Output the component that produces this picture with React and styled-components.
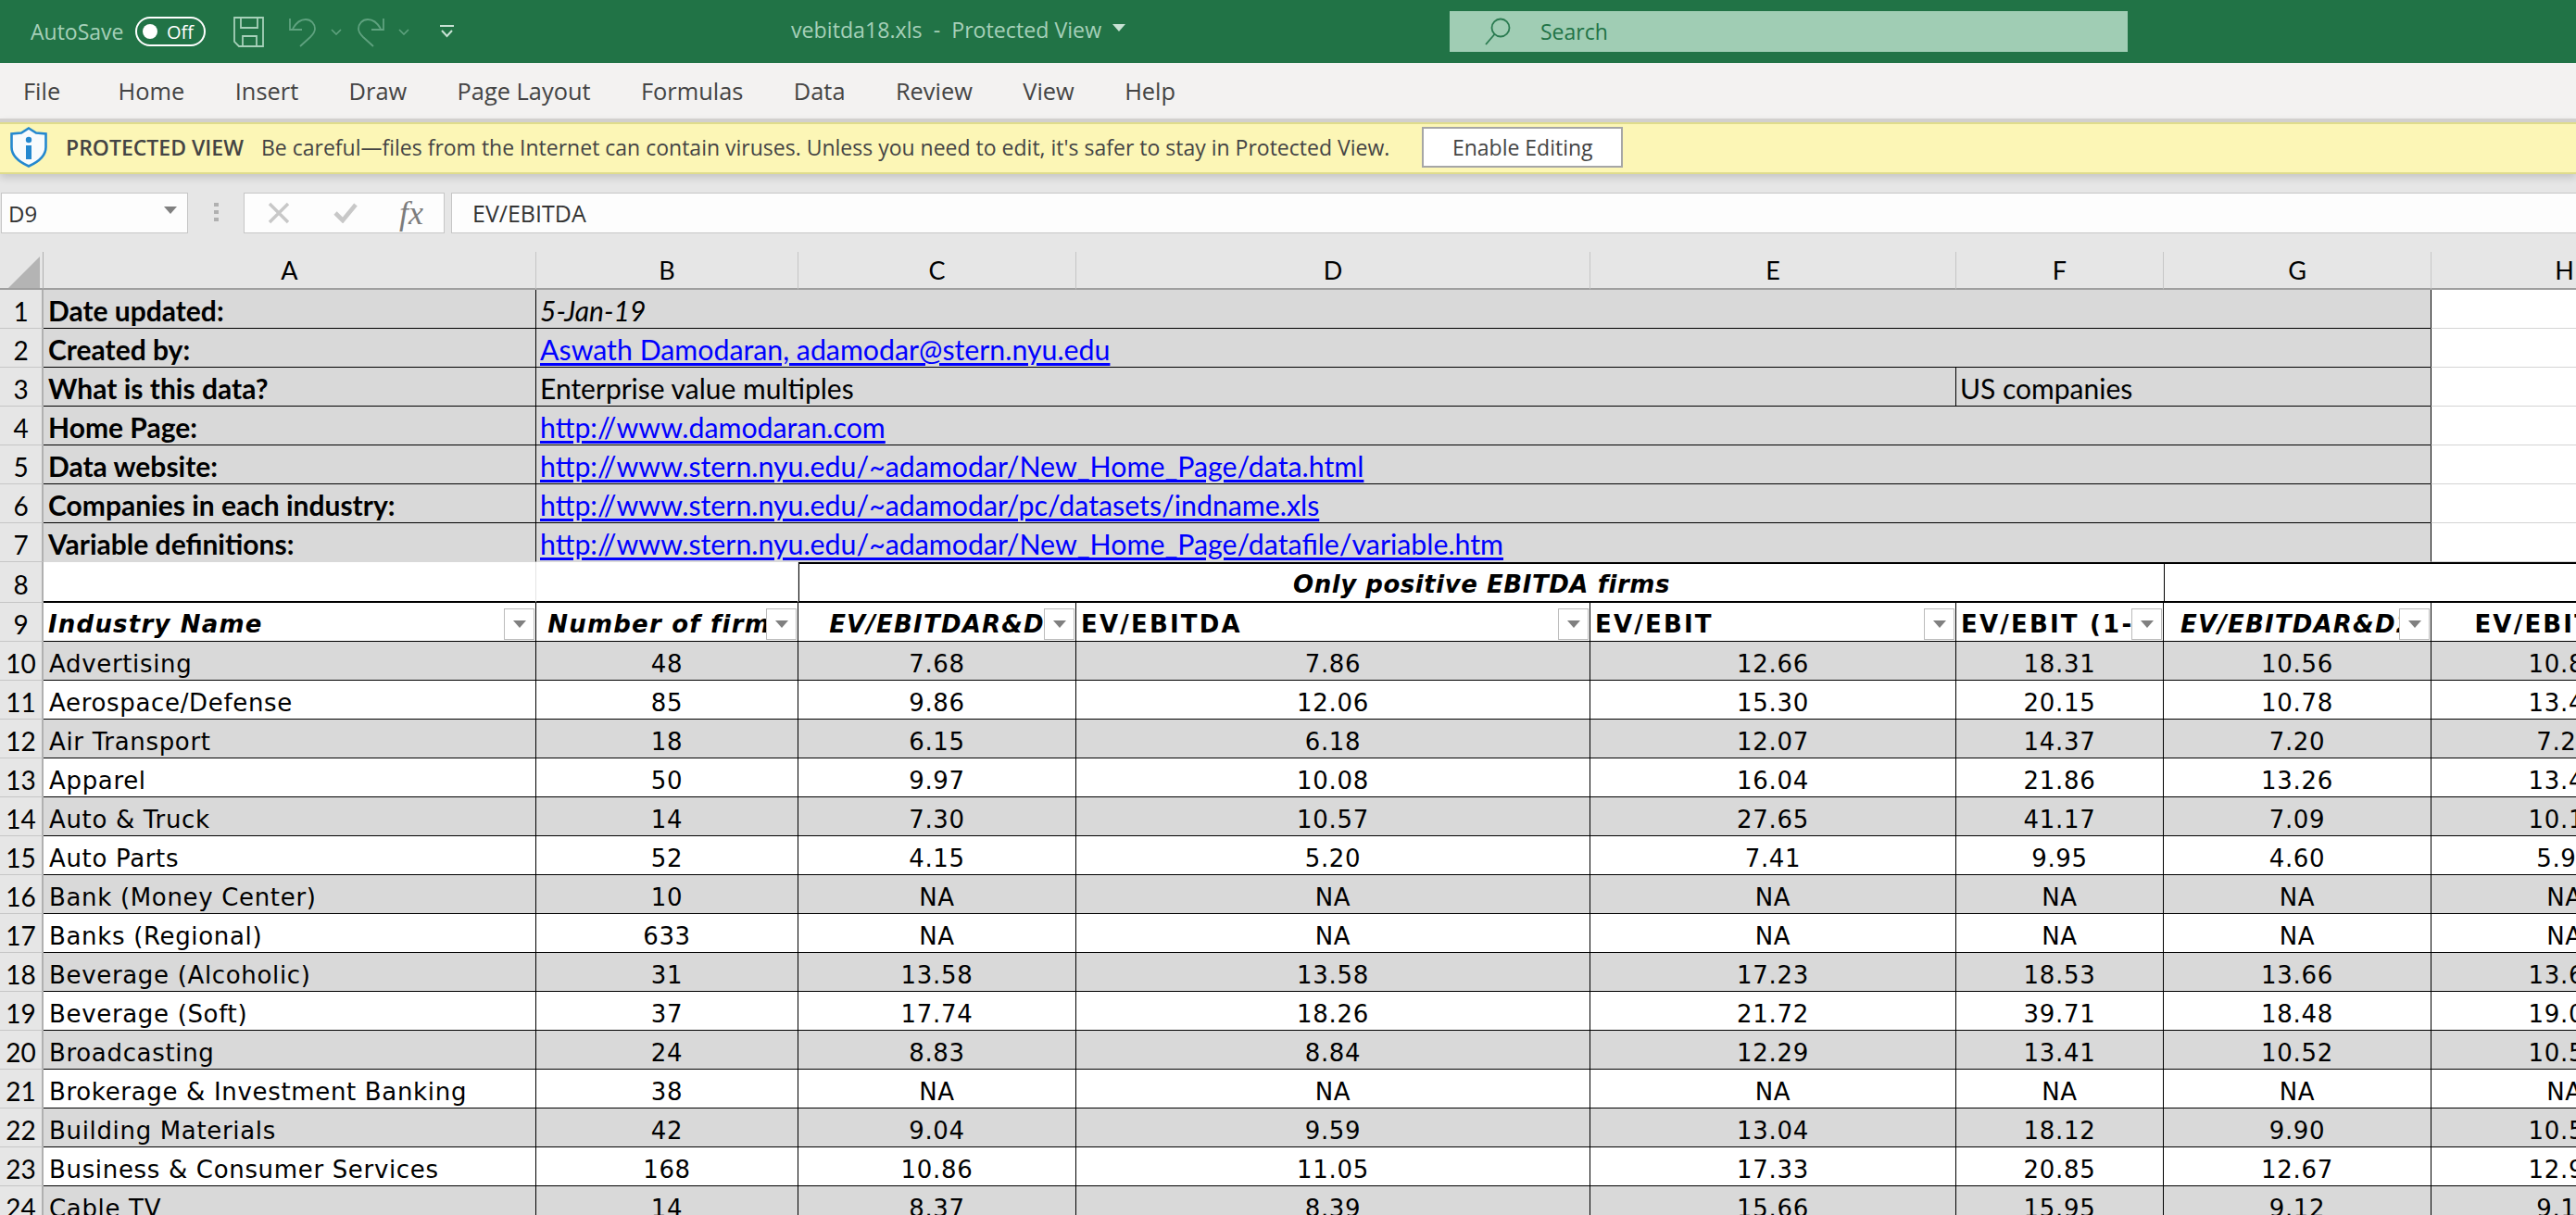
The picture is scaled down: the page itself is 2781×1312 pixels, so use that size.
import React from 'react'
import styled, { createGlobalStyle } from 'styled-components'

const GlobalStyle = createGlobalStyle`
html, body {
  margin: 0;
  padding: 0;
  width: 2781px;
  height: 1312px;
  overflow: hidden;
  background: #e6e6e6;
}
* { box-sizing: border-box; }
`

const ui = '"Open Sans", "Noto Sans", sans-serif'
const calibri = 'Lato, "Noto Sans", sans-serif'
const verdana = '"DejaVu Sans", Verdana, sans-serif'

const TABS = ['File', 'Home', 'Insert', 'Draw', 'Page Layout', 'Formulas', 'Data', 'Review', 'View', 'Help']

const META = [
  { label: 'Date updated:', value: '5-Jan-19', italic: true },
  { label: 'Created by:', value: 'Aswath Damodaran, adamodar@stern.nyu.edu', link: true },
  { label: 'What is this data?', value: 'Enterprise value multiples', extra: 'US companies' },
  { label: 'Home Page:', value: 'http://www.damodaran.com', link: true },
  { label: 'Data website:', value: 'http://www.stern.nyu.edu/~adamodar/New_Home_Page/data.html', link: true },
  { label: 'Companies in each industry:', value: 'http://www.stern.nyu.edu/~adamodar/pc/datasets/indname.xls', link: true },
  { label: 'Variable definitions:', value: 'http://www.stern.nyu.edu/~adamodar/New_Home_Page/datafile/variable.htm', link: true },
]

const HEADERS = [
  { text: 'Industry Name', italic: true, align: 'left' },
  { text: 'Number of firms', italic: true },
  { text: 'EV/EBITDAR&D', italic: true },
  { text: 'EV/EBITDA', align: 'left' },
  { text: 'EV/EBIT', align: 'left' },
  { text: 'EV/EBIT (1-t)', align: 'left' },
  { text: 'EV/EBITDAR&D2', italic: true },
  { text: 'EV/EBITDA2', noFilter: true },
]

const NA = ['NA', 'NA', 'NA', 'NA', 'NA', 'NA']

const ROWS = [
  ['Advertising', '48', '7.68', '7.86', '12.66', '18.31', '10.56', '10.88'],
  ['Aerospace/Defense', '85', '9.86', '12.06', '15.30', '20.15', '10.78', '13.47'],
  ['Air Transport', '18', '6.15', '6.18', '12.07', '14.37', '7.20', '7.23'],
  ['Apparel', '50', '9.97', '10.08', '16.04', '21.86', '13.26', '13.47'],
  ['Auto & Truck', '14', '7.30', '10.57', '27.65', '41.17', '7.09', '10.13'],
  ['Auto Parts', '52', '4.15', '5.20', '7.41', '9.95', '4.60', '5.98'],
  ['Bank (Money Center)', '10', ...NA],
  ['Banks (Regional)', '633', ...NA],
  ['Beverage (Alcoholic)', '31', '13.58', '13.58', '17.23', '18.53', '13.66', '13.67'],
  ['Beverage (Soft)', '37', '17.74', '18.26', '21.72', '39.71', '18.48', '19.02'],
  ['Broadcasting', '24', '8.83', '8.84', '12.29', '13.41', '10.52', '10.53'],
  ['Brokerage & Investment Banking', '38', ...NA],
  ['Building Materials', '42', '9.04', '9.59', '13.04', '18.12', '9.90', '10.50'],
  ['Business & Consumer Services', '168', '10.86', '11.05', '17.33', '20.85', '12.67', '12.90'],
  ['Cable TV', '14', '8.37', '8.39', '15.66', '15.95', '9.12', '9.14'],
]

function App() {
  return (
    <Page>
      <GlobalStyle />
      <TitleBar>
        <QuickAccess>
          <AutoSaveLabel>AutoSave</AutoSaveLabel>
          <Toggle><Knob /><span>Off</span></Toggle>
          <SaveIcon width="33" height="33" viewBox="0 0 33 33">
            <path d="M1 1H32V32H6L1 27Z M8 1V12H26V1 M10 32V21H25V32" />
          </SaveIcon>
          <HistoryIcon width="30" height="33" viewBox="0 0 30 33">
            <path d="M1 2V14H14 M4 13C8 6 13 3 18 3C24 3 28 8 28 13C28 17 26 19 23 22L12 32" />
          </HistoryIcon>
          <MiniChevron width="12" height="7" viewBox="0 0 12 7"><path d="M1 1L6 6L11 1" /></MiniChevron>
          <HistoryIcon $flip width="30" height="33" viewBox="0 0 30 33">
            <path d="M1 2V14H14 M4 13C8 6 13 3 18 3C24 3 28 8 28 13C28 17 26 19 23 22L12 32" />
          </HistoryIcon>
          <MiniChevron width="12" height="7" viewBox="0 0 12 7"><path d="M1 1L6 6L11 1" /></MiniChevron>
          <CustomizeIcon width="15" height="14" viewBox="0 0 15 14">
            <path d="M0 1H15 M2 6L7.5 12L13 6" />
          </CustomizeIcon>
        </QuickAccess>
        <FileTitle>
          vebitda18.xls&nbsp; - &nbsp;Protected View
          <TitleCaret />
        </FileTitle>
        <SearchBox>
          <svg width="30" height="31" viewBox="0 0 30 31" fill="none" stroke="#2a7a50" strokeWidth="1.8">
            <circle cx="17" cy="11" r="9.5" />
            <path d="M10.5 18L1 29" />
          </svg>
          <span>Search</span>
        </SearchBox>
      </TitleBar>

      <TabBar>
        {TABS.map((t) => <Tab key={t}>{t}</Tab>)}
      </TabBar>

      <Banner>
        <svg width="40" height="44" viewBox="0 0 40 44">
          <path d="M20 1.5L28 6.5L38.5 7.5V22C38.5 31 30 38 20 42.5C10 38 1.5 31 1.5 22V7.5L12 6.5Z" fill="#f8fbfd" stroke="#2488cf" strokeWidth="2.6" />
          <circle cx="20" cy="14" r="3.2" fill="#2488cf" />
          <rect x="17" y="20" width="6" height="15" fill="#2488cf" />
        </svg>
        <BannerTitle>PROTECTED VIEW</BannerTitle>
        <BannerText>Be careful—files from the Internet can contain viruses. Unless you need to edit, it's safer to stay in Protected View.</BannerText>
        <EnableButton>Enable Editing</EnableButton>
      </Banner>

      <FormulaRow>
        <NameBox>
          D9
          <NameCaret />
        </NameBox>
        <GripDots><i /><i /><i /></GripDots>
        <FormulaTools>
          <svg width="24" height="24" viewBox="0 0 24 24" fill="none" stroke="#c8c8c8" strokeWidth="3.4">
            <path d="M2 2L22 22M22 2L2 22" />
          </svg>
          <svg width="26" height="22" viewBox="0 0 26 22" fill="none" stroke="#c8c8c8" strokeWidth="4.6">
            <path d="M2 11L10 19L24 2" />
          </svg>
          <FxText>fx</FxText>
        </FormulaTools>
        <FormulaInput>EV/EBITDA</FormulaInput>
      </FormulaRow>

      <Sheet>
        <Corner>
          <svg width="34" height="34" viewBox="0 0 34 34"><path d="M34 0V34H0Z" fill="#b4b4b4" /></svg>
        </Corner>
        {['A', 'B', 'C', 'D', 'E', 'F', 'G', 'H'].map((c) => <ColHead key={c}>{c}</ColHead>)}

        {META.map((m, i) => {
          const last = i === META.length - 1
          return (
            <React.Fragment key={m.label}>
              <RowHead>{i + 1}</RowHead>
              <MetaLabel $last={last}>{m.label}</MetaLabel>
              <MetaValue $span={m.extra ? 4 : 6} $italic={m.italic} $last={last}>
                {m.link ? <SheetLink>{m.value}</SheetLink> : m.value}
              </MetaValue>
              {m.extra && <MetaValue $span={2}>{m.extra}</MetaValue>}
              <EmptyCell />
            </React.Fragment>
          )
        })}

        <RowHead>8</RowHead>
        <BlankCell />
        <BlankCell />
        <GroupCell $span={4}>Only positive EBITDA firms</GroupCell>
        <GroupCell $span={2} />

        <RowHead>9</RowHead>
        {HEADERS.map((h) => (
          <HeaderCell key={h.text} $italic={h.italic} $align={h.align}>
            {h.text}
            {!h.noFilter && <FilterButton><FilterArrow /></FilterButton>}
          </HeaderCell>
        ))}

        {ROWS.map((row, i) => (
          <React.Fragment key={row[0]}>
            <RowHead>{i + 10}</RowHead>
            {row.map((v, j) => (
              <DataCell key={j} $shade={i % 2 === 0} $left={j === 0}>{v}</DataCell>
            ))}
          </React.Fragment>
        ))}
      </Sheet>
    </Page>
  )
}

export default App

const Page = styled.div`
width: 2781px;
height: 1312px;
overflow: hidden;
display: flex;
flex-direction: column;
background: #e6e6e6;
`
const TitleBar = styled.div`
height: 68px;
flex: none;
background: #217346;
display: flex;
align-items: center;
padding-left: 33px;
font-family: ${ui};
`
const QuickAccess = styled.div`
width: 821px;
flex: none;
display: flex;
align-items: center;
`
const AutoSaveLabel = styled.span`
font-size: 23px;
color: #a6d0b9;
width: 113px;
`
const Toggle = styled.div`
width: 76px;
height: 32px;
border: 2px solid #fff;
border-radius: 16px;
display: flex;
align-items: center;
justify-content: space-between;
padding: 0 11px 0 6px;
color: #fff;
font-size: 20px;
margin-right: 30px;
`
const Knob = styled.div`
width: 16px;
height: 16px;
border-radius: 50%;
background: #fff;
`
const SaveIcon = styled.svg`
fill: none;
stroke: #a6d0b9;
stroke-width: 1.8;
margin-right: 27px;
`
const HistoryIcon = styled.svg`
fill: none;
stroke: #5fa27f;
stroke-width: 1.8;
margin-right: 15px;
transform: ${(p) => (p.$flip ? 'scaleX(-1)' : 'none')};
`
const MiniChevron = styled.svg`
fill: none;
stroke: #5fa27f;
stroke-width: 1.6;
margin-right: 16px;
`
const CustomizeIcon = styled.svg`
fill: none;
stroke: #c8e2d4;
stroke-width: 2;
margin-left: 17px;
`
const FileTitle = styled.div`
width: 711px;
flex: none;
font-size: 23.2px;
color: #a6d0b9;
display: flex;
align-items: center;
white-space: nowrap;
padding-bottom: 4px;
`
const TitleCaret = styled.div`
width: 0;
height: 0;
margin: -4px 0 0 12px;
border-left: 7px solid transparent;
border-right: 7px solid transparent;
border-top: 8px solid #c8e2d4;
`
const SearchBox = styled.div`
width: 732px;
height: 44px;
flex: none;
background: #a0cdb4;
display: flex;
align-items: center;
gap: 30px;
padding-left: 38px;
color: #217346;
font-size: 23px;
`
const TabBar = styled.div`
height: 60px;
flex: none;
background: #f3f2f1;
display: flex;
align-items: center;
gap: 54.4px;
padding-left: 25px;
`
const Tab = styled.div`
font-family: ${ui};
font-size: 25.4px;
color: #444;
&:first-child { margin-right: 8px; }
`
const Banner = styled.div`
height: 60px;
flex: none;
border-top: 4px solid #d2d0ce;
border-bottom: 2px solid #dfdc8c;
background: #fcf6b6;
box-shadow: inset 0 2px 0 #dfdc8c, 0 4px 8px rgba(0, 0, 0, 0.14);
display: flex;
align-items: center;
padding-left: 11px;
font-family: ${ui};
font-size: 23px;
color: #444;
position: relative;
`
const BannerTitle = styled.span`
font-weight: 600;
margin-left: 20px;
`
const BannerText = styled.span`
margin-left: 19px;
`
const EnableButton = styled.div`
margin-left: 35px;
width: 217px;
height: 44px;
background: #fff;
border: 2px solid #a6a6a6;
display: flex;
align-items: center;
justify-content: center;
`
const FormulaRow = styled.div`
height: 84px;
flex: none;
padding: 20px 0 20px 1px;
display: flex;
align-items: stretch;
font-family: ${ui};
font-size: 25px;
color: #333;
`
const NameBox = styled.div`
width: 202px;
background: #fdfdfd;
border: 1px solid #c6c6c6;
display: flex;
align-items: center;
justify-content: space-between;
padding: 0 11px 0 7px;
font-size: 24px;
`
const NameCaret = styled.div`
width: 0;
height: 0;
margin-top: -6px;
border-left: 7px solid transparent;
border-right: 7px solid transparent;
border-top: 8px solid #808080;
`
const GripDots = styled.div`
width: 60px;
display: flex;
flex-direction: column;
align-items: center;
justify-content: center;
gap: 4px;
padding-bottom: 3px;
> i {
  display: block;
  width: 5px;
  height: 4px;
  background: #b0b0b0;
}
`
const FormulaTools = styled.div`
width: 217px;
background: #fdfdfd;
border: 1px solid #c6c6c6;
display: flex;
align-items: center;
gap: 47px;
padding-left: 25px;
`
const FxText = styled.span`
font-family: "Liberation Serif", serif;
font-style: italic;
font-size: 36px;
color: #7c7c7c;
margin-left: -2px;
`
const FormulaInput = styled.div`
flex: 1;
margin-left: 7px;
background: #fdfdfd;
border: 1px solid #c6c6c6;
border-right: 0;
display: flex;
align-items: center;
padding-left: 22px;
`
const Sheet = styled.div`
flex: none;
display: grid;
grid-template-columns: 47px 532px 283px 300px 555px 395px 224px 289px 288px;
grid-template-rows: 41px repeat(7, 42px) 44px;
grid-auto-rows: 42px;
background: #fff;
color: #000;
`
const Corner = styled.div`
background: #e6e6e6;
border-right: 1px solid #b0b0b0;
border-bottom: 2px solid #9f9f9f;
display: flex;
align-items: flex-start;
justify-content: flex-end;
padding: 5px 3px 0 0;
`
const ColHead = styled.div`
background: #e6e6e6;
border-right: 1px solid #c6c6c6;
border-bottom: 2px solid #9f9f9f;
display: flex;
align-items: center;
justify-content: center;
font-family: ${calibri};
font-size: 27px;
`
const RowHead = styled.div`
background: #e6e6e6;
border-right: 2px solid #b0b0b0;
border-bottom: 1px solid #c6c6c6;
display: flex;
align-items: center;
justify-content: center;
font-family: ${calibri};
font-size: 28px;
padding-top: 5px;
`
const MetaLabel = styled.div`
background: #d9d9d9;
border-right: 1px solid #000;
border-bottom: 1px solid ${(p) => (p.$last ? '#d9d9d9' : '#000')};
display: flex;
align-items: center;
padding: 2px 0 0 5px;
font-family: ${calibri};
font-size: 30px;
font-weight: 700;
white-space: nowrap;
`
const MetaValue = styled.div`
grid-column: span ${(p) => p.$span};
background: #d9d9d9;
border-right: 1px solid #000;
border-bottom: 1px solid ${(p) => (p.$last ? '#d9d9d9' : '#000')};
display: flex;
align-items: center;
padding: 2px 0 0 4px;
font-family: ${calibri};
font-size: 30px;
font-style: ${(p) => (p.$italic ? 'italic' : 'normal')};
white-space: nowrap;
`
const SheetLink = styled.span`
color: #0000ff;
font-size: 30.3px;
text-decoration: underline;
text-underline-offset: 3px;
`
const EmptyCell = styled.div`
background: #fff;
border-left: 1px solid #000;
margin-left: -1px;
border-bottom: 1px solid #d4d4d4;
`
const BlankCell = styled.div`
background: #fff;
border-right: 1px solid #e4e4e4;
border-bottom: 2px solid #000;
`
const GroupCell = styled.div`
grid-column: span ${(p) => p.$span};
background: #fff;
border-top: 2px solid #000;
border-bottom: 2px solid #000;
border-left: 1px solid #000;
display: flex;
align-items: center;
justify-content: center;
padding-top: 4px;
font-family: ${verdana};
font-size: 26px;
letter-spacing: 0.55px;
font-weight: 700;
font-style: italic;
`
const HeaderCell = styled.div`
position: relative;
background: #fff;
border-right: 1px solid #000;
border-bottom: 1px solid #000;
display: flex;
align-items: center;
justify-content: ${(p) => (p.$align === 'left' ? 'flex-start' : 'center')};
padding: 5px 0 0 ${(p) => (p.$align === 'left' ? '5px' : '0')};
font-family: ${verdana};
font-size: 26px;
letter-spacing: ${(p) => (p.$italic ? '1.2px' : '2.2px')};
font-weight: 700;
font-style: ${(p) => (p.$italic ? 'italic' : 'normal')};
white-space: nowrap;
overflow: hidden;
`
const FilterButton = styled.div`
position: absolute;
right: 1px;
bottom: 1px;
width: 33px;
height: 34px;
background: #fff;
border: 1px solid #bcbcbc;
display: flex;
align-items: center;
justify-content: center;
`
const FilterArrow = styled.div`
width: 0;
height: 0;
border-left: 7px solid transparent;
border-right: 7px solid transparent;
border-top: 8px solid #808080;
`
const DataCell = styled.div`
background: ${(p) => (p.$shade ? '#d9d9d9' : '#fff')};
border-right: 1px solid #000;
border-bottom: 1px solid #000;
display: flex;
align-items: center;
justify-content: ${(p) => (p.$left ? 'flex-start' : 'center')};
padding: 7px 0 0 ${(p) => (p.$left ? '6px' : '0')};
font-family: ${verdana};
font-size: 26px;
letter-spacing: 0.67px;
white-space: nowrap;
`
